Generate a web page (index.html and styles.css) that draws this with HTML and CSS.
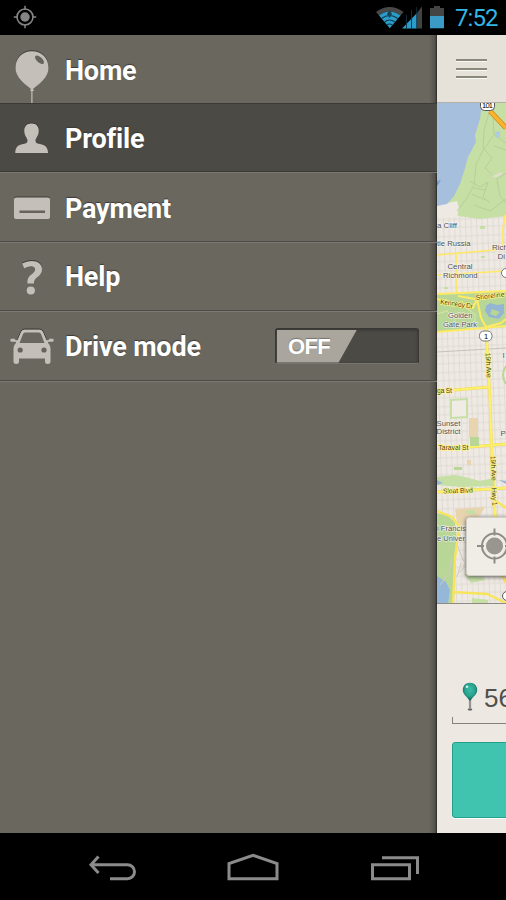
FILE: index.html
```
<!DOCTYPE html>
<html lang="en">
<head>
    <meta charset="UTF-8">
    <meta name="viewport" content="width=device-width, initial-scale=1.0">
    <title>Menu</title>
    <link rel="stylesheet" href="styles.css">
</head>
<body>
    <div class="phone">
        <header class="status-bar">
            <svg class="gps" width="24" height="24" viewBox="0 0 24 24">
                <circle cx="12" cy="12" r="8" fill="none" stroke="#858585" stroke-width="1.6"/>
                <circle cx="12" cy="12" r="4.7" fill="#858585"/>
                <path d="M12 .8v4M12 19.200v4M.8 12h4M19.200 12h4" stroke="#858585" stroke-width="1.500"/>
            </svg>
            <div class="status-right">
                <svg width="70" height="35" viewBox="375 0 70 35">
                    <!-- wifi -->
                    <path d="M376 12Q389.500 2 403.500 12L400.500 15.500Q389.500 7.500 379 15.500Z" fill="#484848"/>
                    <path d="M379 15.500Q389.500 7.500 400.500 15.500L389.800 28.200Z" fill="#2b9bc9"/>
                    <path d="M381.500 18.500Q389.500 12.500 397.800 18.500M384.500 22Q389.500 18 394.800 22M387 25Q389.500 23 392.300 25" fill="none" stroke="#123848" stroke-width="1.200"/>
                    <path d="M389.500 10l2.500 4-2.500 4-2.500-4Z" fill="#174354"/>
                    <!-- signal -->
                    <path d="M402 28.500L417 13V28.500Z" fill="#2b9bc9"/>
                    <path d="M417 13L422 6.500V28.500H417Z" fill="#424242"/>
                    <path d="M406.500 15v14M411.500 10v19M416.700 7v22" stroke="#0d3140" stroke-width=".9"/>
                    <!-- battery -->
                    <path d="M430 8H434V6H440V8H444V16H430Z" fill="#444"/>
                    <path d="M430 16H444V28.300H430Z" fill="#3a9cc6"/>
                </svg>
                <span class="clock">7:52</span>
            </div>
        </header>

        <main class="screen">
            <nav class="menu">
                <a class="menu-item home">
                    <svg class="menu-icon" width="65" height="68" viewBox="0 0 65 68">
                        <path class="shade" d="M32 15.300C22 15.300 15.500 22.500 15.500 32C15.500 42 25 48 31 53.500H33C39 48 48.500 42 48.500 32C48.500 22.500 42 15.300 32 15.300Z"/>
                        <path d="M32 16.300C22 16.300 15.500 23.500 15.500 33C15.500 42.500 25 49 31 54L30 56H34L33 54C39 49 48.500 42.500 48.500 33C48.500 23.500 42 16.300 32 16.300Z"/>
                        <path d="M31.300 55H32.500V68H31.300Z"/>
                        <ellipse class="hole" cx="39.500" cy="24.700" rx="5.500" ry="2.700" transform="rotate(42 39.500 24.700)"/>
                    </svg>
                    <span>Home</span>
                </a>
                <a class="menu-item active">
                    <svg class="menu-icon" width="65" height="68" viewBox="0 0 65 68">
                        <path class="shade" d="M31.500 18.500C26.500 18.500 24 22 24.300 26.500C24.500 31 27 34 27 34H36C36 34 38.500 31 38.700 26.500C39 22 36.500 18.500 31.500 18.500Z"/>
                        <path d="M31.500 19.500C26.500 19.500 24 23 24.300 27.500C24.500 32 27.500 34 27.500 36.500C27.500 39.500 25.500 39.700 22 40.300C17.500 41.200 15.300 44 15.300 49H48C48 44 45.500 41.200 41 40.300C37.500 39.700 35.500 39.500 35.500 36.500C35.500 34 38.500 32 38.700 27.500C39 23 36.500 19.500 31.500 19.500Z"/>
                    </svg>
                    <span>Profile</span>
                </a>
                <a class="menu-item">
                    <svg class="menu-icon" width="65" height="68" viewBox="0 0 65 68">
                        <rect class="shade" x="14" y="23.500" width="36" height="20" rx="2"/>
                        <rect x="14" y="24.500" width="36" height="21.500" rx="2"/>
                        <rect class="hole" x="19.500" y="37.500" width="25.500" height="2.500"/>
                    </svg>
                    <span>Payment</span>
                </a>
                <a class="menu-item help">
                    <svg class="menu-icon" width="65" height="68" viewBox="0 0 65 68">
                        <path class="shade" d="M22.200 19.500Q26.500 17 31.500 17C38 17 42 20.300 42 25.200V27L24 24.500Z"/>
                        <path d="M22.200 20.500Q26.500 18 31.500 18C38 18 42 21.300 42 26.200C42 30 40 32 37.500 34C35 36 34 37 34 40.500H27.500C27.200 36 28.500 34 31.200 31.500C33.500 29.500 35 28.500 35 26.500C35 24.500 33.500 23.500 31.300 23.500C28.800 23.500 26.500 24.300 24.200 25.600Z"/>
                        <path d="M24.200 25.600C26.500 24.300 28.800 23.500 31.300 23.500C33.500 23.500 35 24.500 35 26.500C35 28.500 33.500 29.500 31.200 31.500L22 33Z" class="gap"/>
                        <circle cx="30.800" cy="47.500" r="4.100"/>
                    </svg>
                    <span>Help</span>
                </a>
                <div class="menu-item drive">
                    <svg class="menu-icon" width="65" height="68" viewBox="0 0 65 68">
                        <path fill="none" stroke="#3f3d39" d="M17.500 26.500L21 18Q22 16 24.500 16H39.500Q42 16 43 18L46.500 26.500"/>
                        <path fill-rule="evenodd" d="M24.500 16.800H39.500Q42 16.800 43 19L46.500 27.300H48.500L49.300 25.800H52.500Q53.700 25.800 53.700 27.200Q53.700 28.800 52.300 28.800H48.500L47.800 29.800Q50.500 32 50.500 35V48.500Q50.500 51 47.700 51Q45 51 45 48.500V45.500H19V48.500Q19 51 16.300 51Q13.500 51 13.500 48.500V35Q13.500 32 16.200 29.800L15.500 28.800H11.700Q10.300 28.800 10.300 27.200Q10.300 25.800 11.500 25.800H14.700L15.500 27.300H17.500L21 19Q22 16.800 24.500 16.800ZM25 19.500Q23.700 19.500 23 21L19.500 30H44.500L41 21Q40.300 19.500 39 19.500Z"/>
                        <circle class="hole" cx="20.200" cy="37" r="2.600"/>
                        <circle class="hole" cx="44" cy="37" r="2.600"/>
                    </svg>
                    <span>Drive mode</span>
                    <div class="toggle"><span class="toggle-knob">OFF</span></div>
                </div>
            </nav>

            <section class="content">
                <div class="top-bar">
                    <div class="burger"><i></i><i></i><i></i></div>
                </div>
                <div class="map">
                    <svg width="69" height="501" viewBox="437 103 69 501">
                        <defs>
                            <pattern id="streets" width="11" height="17" patternUnits="userSpaceOnUse" patternTransform="rotate(-2)">
                                <path d="M1 0V17M6.500 0V17M0 5H11M0 14H11" stroke="#dcd7cf" stroke-width=".8"/>
                            </pattern>
                        </defs>
                        <rect x="437" y="103" width="69" height="501" fill="#eeeae3"/>
                        <rect x="437" y="103" width="69" height="501" fill="url(#streets)"/>
                        <!-- ocean and presidio -->
                        <path d="M437 103H506V216L480 219L458 216L455 210L449 203L437 206Z" fill="#c5dfa5"/>
                        <path d="M437 206L447 203L457 201L459 208L457 217L437 218Z" fill="#eeeae3"/>
                        <path d="M437 103H482L480 119L475 135L476 142L468 157L465 168L460 184L454 196L447 204L437 206Z" fill="#a5bfdd"/>
                        <path d="M489 113L484 130L483 150L476 165L474 185L467 198L457 211M493 115L494 135L506 143M493 136L484 149L492 158L485 168L497 179L506 173M494 146L506 150M470 181L480 187L488 182L483 197L490 203M473 188L486 190M472 194L485 200M497 180L500 196L506 203M474 205L490 211L506 199" fill="none" stroke="#b3ca96" stroke-width=".8"/>
                        <path d="M495 132L500 131L500 137L496 138Z" fill="#b0cbdc"/>
                        <path d="M492 176L501 172L503 174L495 178Z" fill="#e0dfc7"/>
                        <path d="M490 111L506 128" stroke="#c98e25" stroke-width="5"/>
                        <path d="M490 111L506 128" stroke="#ffb32c" stroke-width="3.500"/>
                        <rect x="480.500" y="99" width="14" height="11.500" rx="4" fill="#fff" stroke="#555"/>
                        <text x="482" y="108" font-size="7.500" textLength="11">101</text>
                        <text x="436" y="184" font-size="8" font-style="italic" fill="#557eb0">y</text>
                        <!-- richmond -->
                        <path d="M480 226h5v3h-5zM481 256h4v2h-4zM444 287h4v2h-4z" fill="#c5dfa5"/>
                        <path d="M437 255L506 249M456 254V290L459 297M437 275L506 271M505 215L503 228V250" fill="none" stroke="#ffe864" stroke-width="1.700"/>
                        <!-- golden gate park -->
                        <path d="M437 294L506 291V327L437 332Z" fill="#b8d797"/>
                        <path d="M486 306L490 303L497 305L504 304V313L499 319L489 317L485 311ZM492 309L490 314L496 316L500 312Z" fill="#94b5d4" fill-rule="evenodd"/>
                        <path d="M437 314L447 311L456 321M466 308L475 314V324" fill="none" stroke="#d7e5a5"/>
                        <path d="M437 294L506 291M437 299L455 304L473 308L476 301L481 295M477 299L481 318L486 327L501 323L506 319M437 332L506 326M458 296L475 299M486 327L486 345" fill="none" stroke="#ffea64" stroke-width="2"/>
                        <!-- sunset -->
                        <path d="M437 352L506 348" stroke="#c6c2bb"/>
                        <path d="M486 327L490 400L492 458L496 530L506 560M454 390L489 387M470 447L506 444M437 492L506 488" fill="none" stroke="#ecd95b" stroke-width="2.800"/>
                        <path d="M486 327L490 400L492 458L496 530L506 560M454 390L489 387M470 447L506 444M437 492L506 488" fill="none" stroke="#fff06a" stroke-width="2"/>
                        <path d="M451 400L467 399V417L451 418Z" fill="#f0ece5" stroke="#c5dfa5" stroke-width="2"/>
                        <path d="M469 418h9v20h-9z" fill="#e9d4b0"/>
                        <path d="M470 437h9v9h-9zM454 467h8v3h-8z" fill="#b8d797"/>
                        <path d="M467 460h4v5h-4z" fill="#e9d4b0"/>
                        <path d="M506 366Q500 375 506 384" fill="none" stroke="#b8d797" stroke-width="2"/>
                        <!-- state university -->
                        <path d="M437 477L455 475L461 476L480 481L494 478V486L461 487L437 485Z" fill="#c5dfa5"/>
                        <path d="M437 480L443 483L437 485ZM499 480L506 481V484Z" fill="#96b8d8"/>
                        <path d="M437 513L448 516L455 522L457 541L453 604H437Z" fill="#b8d797"/>
                        <path d="M455 509L468 508L485 507L478 518L468 523L458 528Z" fill="#e9d4b0"/>
                        <path d="M437 576L446 582L450 590L448 604H437Z" fill="#96b8d8"/>
                        <path d="M464 574L477 572L485 580L471 583ZM472 598L488 600V604H472ZM462 512L474 509L476 515Z" fill="#c5dfa5"/>
                        <path d="M457 544L463 560L474 570L485 578M461 563L457 577M468 563L459 573M440 585L449 573L452 557M474 556L463 566M458 533L468 546" fill="none" stroke="#d1cbc1"/>
                        <path d="M437 511L452 517L459 526L455 558L453 604M453 592L487 594L506 603M496 501L506 508M501 574L506 583" fill="none" stroke="#f8e45a" stroke-width="2.300"/>
                        <!-- labels -->
                        <g font-size="8" fill="#505050" stroke="#f6f3ed" stroke-width="1.200" paint-order="stroke" lengthAdjust="spacingAndGlyphs">
                            <text x="437" y="228" textLength="20" lengthAdjust="spacingAndGlyphs">a Cliff</text>
                            <text x="437" y="245.500" textLength="33.500" lengthAdjust="spacingAndGlyphs">tle Russia</text>
                            <text x="492" y="250">Rich</text>
                            <text x="497.500" y="259">Di</text>
                            <text x="447.500" y="269" textLength="25" lengthAdjust="spacingAndGlyphs">Central</text>
                            <text x="443" y="277.500" textLength="34.500" lengthAdjust="spacingAndGlyphs">Richmond</text>
                            <text x="448" y="318" textLength="24.500" lengthAdjust="spacingAndGlyphs">Golden</text>
                            <text x="443" y="326.500" textLength="34" lengthAdjust="spacingAndGlyphs">Gate Park</text>
                            <text x="502.500" y="357.500">I</text>
                            <text x="436.500" y="425.500" textLength="24" lengthAdjust="spacingAndGlyphs">Sunset</text>
                            <text x="436.500" y="434" textLength="24" lengthAdjust="spacingAndGlyphs">District</text>
                            <text x="500.500" y="436">P</text>
                            <text x="437" y="531" textLength="29" lengthAdjust="spacingAndGlyphs">i Francis</text>
                            <text x="437" y="540.500" textLength="28" lengthAdjust="spacingAndGlyphs">e Univer</text>
                        </g>
                        <g font-size="7" fill="#3f3f2d" stroke="#fff37e" stroke-width="1.400" paint-order="stroke">
                            <text transform="translate(440 304) rotate(8)" textLength="33">Kennedy Dr</text>
                            <text transform="translate(476 300) rotate(-7)" textLength="29">Shoreline</text>
                            <text transform="translate(485.500 353) rotate(87)" textLength="25">19th Ave</text>
                            <text transform="translate(490.500 456) rotate(87)" textLength="25">19th Ave</text>
                            <text transform="translate(491.500 488) rotate(87)" textLength="18">Hwy 1</text>
                            <text x="437" y="393" textLength="15">ga St</text>
                            <text x="438.500" y="450" textLength="30">Taraval St</text>
                            <text transform="translate(443 493.500) rotate(-2)" textLength="30">Sloat Blvd</text>
                        </g>
                        <rect x="479.500" y="331" width="12.500" height="10" rx="4.500" fill="#fff" stroke="#777"/>
                        <text x="484" y="339" font-size="7.500">1</text>
                        <circle cx="506" cy="273" r="4.500" fill="#fff" stroke="#777"/>
                        <circle cx="507" cy="596" r="4.500" fill="#fff" stroke="#555"/>
                    </svg>
                    <div class="locate">
                        <svg width="41" height="58" viewBox="1 1 41 58">
                            <circle cx="28.500" cy="29" r="12.500" fill="none" stroke="#8f8c87" stroke-width="2"/>
                            <circle cx="28.500" cy="29" r="8.500" fill="#99958f"/>
                            <path d="M28.500 11.500v7M28.500 39.500v7M11 29h7M39 29h7" stroke="#8f8c87" stroke-width="2"/>
                        </svg>
                    </div>
                </div>
                <div class="booking">
                    <div class="address">
                        <svg width="18" height="34" viewBox="0 0 18 34">
                            <defs>
                                <radialGradient id="pin" cx=".5" cy=".4" r=".55">
                                    <stop offset="0" stop-color="#3cbda8"/>
                                    <stop offset=".65" stop-color="#28a28e"/>
                                    <stop offset="1" stop-color="#15685d"/>
                                </radialGradient>
                            </defs>
                            <ellipse cx="9" cy="29.500" rx="2.300" ry="1" fill="#555"/>
                            <path d="M9 18V29.500" stroke="#777" stroke-width="2.200"/>
                            <path d="M9 18V29" stroke="#bbb" stroke-width=".8"/>
                            <path d="M9 2.800C4.500 2.800 1.800 6 1.800 10C1.800 14.500 6 16.500 8.300 20.500H9.700C12 16.500 16.200 14.500 16.200 10C16.200 6 13.500 2.800 9 2.800Z" fill="url(#pin)"/>
                            <circle cx="6" cy="6.800" r="1.400" fill="#c2eee5"/>
                        </svg>
                        <span>56</span>
                    </div>
                    <div class="request"></div>
                </div>
            </section>
        </main>

        <footer class="nav-bar">
            <svg width="506" height="67" viewBox="0 833 506 67" fill="none" stroke="#8b8b8b" stroke-width="3">
                <path d="M92 864.700H127.500A7 7 0 0 1 127.500 878.700H110M98.500 856.500L91 864.700L98.500 873"/>
                <path d="M229 878.700V863.500L253 855.300L277 863.500V878.700Z"/>
                <path d="M372.500 864.700H409.500V878.700H372.500ZM382 857.700H417.500V874"/>
            </svg>
        </footer>
    </div>
</body>
</html>
```

FILE: styles.css
```
* {
    box-sizing: border-box;
}

body {
    margin: 0;
    background-color: #000;
    font-family: Roboto, sans-serif;
}

.phone {
    display: flex;
    flex-direction: column;
    width: 506px;
    height: 900px;
    overflow: hidden;
}

.status-bar {
    display: flex;
    justify-content: space-between;
    height: 35px;
    padding: 0 8px 0 13px;
    background-color: #000;
}

.gps {
    margin-top: 5px;
}

.status-right {
    display: flex;
}

.clock {
    width: 43px;
    margin-left: 10px;
    color: #33b5e5;
    font-size: 24px;
    line-height: 36px;
    letter-spacing: -0.9px;
    white-space: nowrap;
}

.screen {
    display: flex;
    height: 798px;
}

.menu {
    width: 437px;
    background: linear-gradient(to right, transparent 429px, #55524c 435px, #292825 437px), #6a675f;
}

.menu-item {
    display: flex;
    align-items: center;
    height: 69px;
    border-top: 1px solid #7b7972;
    border-bottom: 1px solid #4c4a45;
    color: #fff;
    font-size: 27px;
    font-weight: bold;
    letter-spacing: -0.2px;
    text-shadow: 0 -1px 1px #3c3a36;
}

.menu-item > span {
    padding-top: 3px;
}

.menu-item:nth-child(3) {
    height: 70px;
}

.menu-item:last-child {
    height: 70px;
    border-bottom: 0;
    box-shadow: inset 0 -1px #4c4a45, 0 1px #7b7972;
}

.menu-item.help > span,
.menu-item.drive > span {
    padding-top: 1px;
}

.menu-item.home {
    height: 68px;
    border: 0;
}

.menu-item.home > span {
    padding-top: 4px;
}

.menu-item.active {
    border-color: #3a3935;
    background-color: #4b4a45;
}

.menu-icon {
    flex: none;
    fill: #c4bfb9;
}

.shade {
    fill: #3f3d39;
}

.hole {
    fill: #66635c;
}

.gap {
    fill: #6a675f;
}

.toggle {
    width: 144px;
    height: 36px;
    margin: 0 18px 2px auto;
    padding: 1px;
    border: 1px solid #393834;
    border-bottom-color: #777570;
    border-radius: 3px;
    background-color: #4b4a45;
    box-shadow: inset 0 1px 3px #333;
}

.toggle-knob {
    display: block;
    width: 80px;
    height: 33px;
    padding-left: 11px;
    clip-path: polygon(0 0, 100% 0, 77% 100%, 0 100%);
    background-color: #aaa69d;
    font: bold 22px/34px "Liberation Sans", sans-serif;
    letter-spacing: -0.6px;
    text-shadow: 0 -1px 1px #77736c;
}

.content {
    width: 69px;
    overflow: hidden;
    background-color: #ede8e2;
}

.top-bar {
    height: 68px;
    padding: 24px 0 0 19px;
    border-bottom: 1px solid #b4b0a8;
    background-color: #e6e2da;
}

.burger {
    display: grid;
    gap: 6.5px;
    width: 31px;
}

.burger i {
    height: 2px;
    background-color: #8b887c;
    box-shadow: 0 1px #faf8f3;
}

.map {
    position: relative;
    height: 501px;
    overflow: hidden;
    border-bottom: 1px solid #8d8a83;
    font-family: "Liberation Sans", sans-serif;
}

.map svg {
    display: block;
}

.locate {
    position: absolute;
    left: 29px;
    top: 414px;
    width: 60px;
    height: 59px;
    border: 1px solid #d1cdc6;
    border-radius: 3px;
    background-color: #f0ede7;
    box-shadow: 0 1px 4px #555;
}

.booking {
    padding: 76px 0 0 15px;
}

.address {
    display: flex;
    width: 70px;
    height: 44px;
    padding-left: 9px;
    border-bottom: 1px solid #858179;
    background: linear-gradient(#858179, #858179) 0 100% / 1px 6px no-repeat;
    color: #504f4b;
    font: 26px/37px "Liberation Sans", sans-serif;
}

.address svg {
    flex: none;
}

.address span {
    margin-left: 5px;
}

.request {
    width: 80px;
    height: 76px;
    margin-top: 18px;
    border: 1px solid #22a08c;
    border-radius: 3px;
    background-color: #40c4af;
    box-shadow: 0 1px #fff;
}

.nav-bar {
    height: 67px;
    background-color: #000;
}

.nav-bar svg {
    display: block;
}
```
